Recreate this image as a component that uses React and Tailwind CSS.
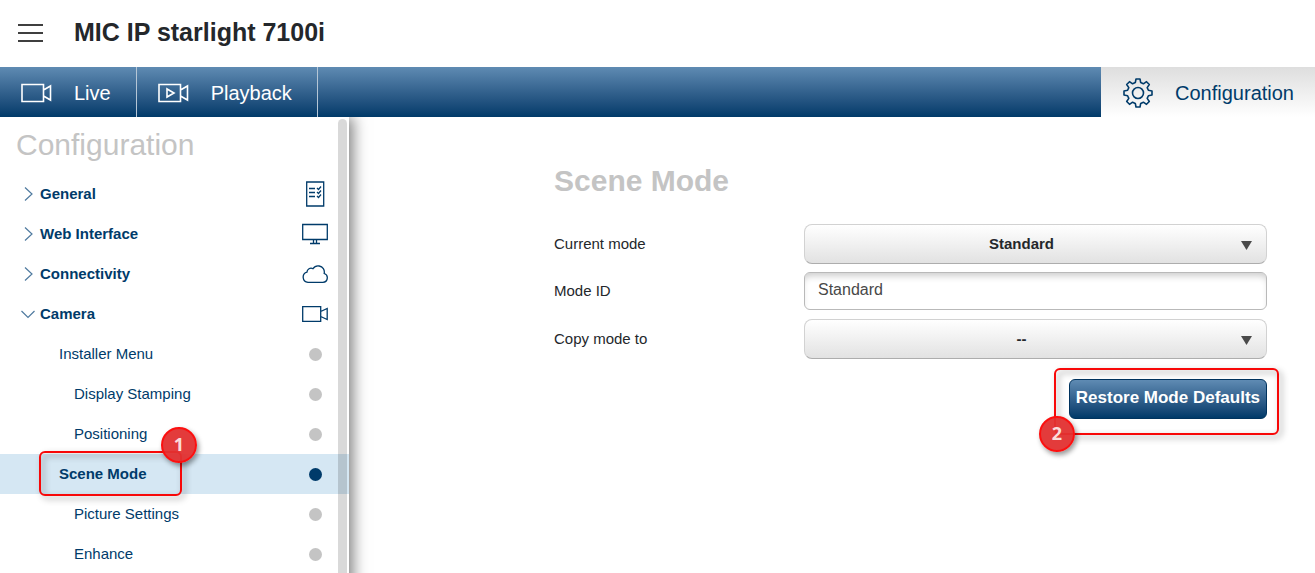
import { useState } from 'react';
import clsx from 'clsx';

const sections = [
    { label: 'General', icon: 'list' },
    { label: 'Web Interface', icon: 'monitor' },
    { label: 'Connectivity', icon: 'cloud' },
    { label: 'Camera', icon: 'camera', open: true },
];

const pages = [
    { label: 'Installer Menu', level: 1 },
    { label: 'Display Stamping', level: 2 },
    { label: 'Positioning', level: 2 },
    { label: 'Scene Mode', level: 1, active: true, step: 1 },
    { label: 'Picture Settings', level: 2 },
    { label: 'Enhance', level: 2 },
];

function CameraIcon({ play, className }) {
    return (
        <svg viewBox="0 0 31 20" fill="none" stroke="currentColor" strokeWidth="1.6" className={className}>
            <path d="M1 1.500h21.500v17H1zM22.500 7l7-4v14l-7-4" />
            {play && <path d="M9 6v8l7-4z" />}
        </svg>
    );
}

function GearIcon() {
    return (
        <svg width="30" height="30" viewBox="0 0 30 30" fill="none" stroke="currentColor" strokeWidth="1.6" strokeLinejoin="round">
            <path d="M12.3 4.600L13 1h4l.7 3.600 2.700 1.200 3.100-2.100 2.800 2.800-2.100 3.100 1.200 2.700L29 13v4l-3.600.7-1.200 2.700 2.100 3.100-2.800 2.800-3.100-2.100-2.700 1.200L17 29h-4l-.7-3.600-2.700-1.200-3.100 2.100-2.800-2.800 2.100-3.100-1.200-2.700L1 17v-4l3.600-.7 1.200-2.700-2.100-3.100 2.800-2.800 3.100 2.100z" />
            <circle cx="15" cy="15" r="5.500" />
        </svg>
    );
}

function SectionIcon({ name }) {
    if (name === 'camera') {
        return (
            <svg width="26" height="16" viewBox="0 0 26 16" fill="none" stroke="currentColor" strokeWidth="1.3">
                <path d="M.7.700h18v14.600h-18zM18.700 5.500l6.500-3v11l-6.500-3" />
            </svg>
        );
    }
    if (name === 'list') {
        return (
            <svg width="26" height="26" viewBox="0 0 26 26" fill="none" stroke="currentColor" strokeWidth="1.3">
                <path d="M4.700 1h17v24h-17z" />
                <path d="M7 7.500h6M7 11.500h6M7 15.500h6M15 7l1.500 1.500L19 5.500M15 11l1.500 1.500L19 9.500M15 15l1.500 1.500 2.500-3" />
            </svg>
        );
    }
    if (name === 'monitor') {
        return (
            <svg width="26" height="26" viewBox="0 0 26 26" fill="none" stroke="currentColor" strokeWidth="1.3">
                <path d="M.7 3.500h24.600v15H.7zM11.500 18.500v3.500M14.500 18.500v3.500M8 22.500h10" />
            </svg>
        );
    }
    return (
        <svg width="26" height="26" viewBox="0 0 26 26" fill="none" stroke="currentColor" strokeWidth="1.3">
            <path d="M6 21.300a5.200 5.200 0 0 1-1-10.200c0-2.900 3.300-5 6-3.400 1.500-2.300 4-3.100 6.200-2.700 3.700.6 5.700 3.800 5 7.500 2 .7 3.200 2.400 3.100 4.400-.1 2.500-2 4.400-4.500 4.400z" />
        </svg>
    );
}

function Chevron({ open }) {
    return (
        <svg width="14" height="14" viewBox="0 0 14 14" fill="none" stroke="#4f7a9f" strokeWidth="1.2">
            <path d={open ? 'M.5 4l6.500 6.500L13.500 4' : 'M4 .5L11 7l-7 6.500'} />
        </svg>
    );
}

// red frame with a numbered badge, laid over the element it points at
function Callout({ step, frame, badge }) {
    return (
        <div className="pointer-events-none">
            <div
                className={clsx(
                    'absolute z-10 rounded-md border-2 border-[#f80808] drop-shadow-[3px_3px_3px_rgba(0,0,0,0.4)]',
                    frame,
                )}
            />
            <div
                className={clsx(
                    "absolute z-10 flex size-9 items-center justify-center rounded-full border-2 border-[#fb1010] bg-[#e23030]/95 pb-[2px] font-['Noto_Sans',sans-serif] text-lg font-bold text-[#fbdcdc] shadow-[2px_3px_5px_rgba(0,0,0,0.4)]",
                    badge,
                )}
            >
                {step}
            </div>
        </div>
    );
}

function NavButton({ label, children }) {
    return (
        <button className="flex items-center gap-[22px] border-r border-[#b5c6d6] pt-[2px] pr-[25px] pl-[21px] text-xl text-white">
            {children}
            {label}
        </button>
    );
}

function Sidebar() {
    return (
        <aside className="relative z-0 -mb-8 w-[349px] shrink-0 bg-white shadow-[4px_0_14px_rgba(0,0,0,0.5)]">
            <h2 className="h-[57px] pl-4 text-[30px] leading-[55px] text-[#c4c4c4]">Configuration</h2>
            <nav className="text-[15px] text-[#003b6a]">
                {sections.map((section) => (
                    <button
                        key={section.label}
                        aria-expanded={!!section.open}
                        className="flex h-10 w-full items-center pr-[21px] pl-[21px] font-bold"
                    >
                        <Chevron open={section.open} />
                        <span className="ml-[5px] flex-1 text-left">{section.label}</span>
                        <SectionIcon name={section.icon} />
                    </button>
                ))}
                {pages.map((page) => (
                    <div key={page.label} className="relative">
                        <a
                            href="#"
                            className={clsx(
                                'flex h-10 items-center justify-between pr-[27px]',
                                page.level === 1 ? 'pl-[59px]' : 'pl-[74px]',
                                page.active && 'bg-[#d5e7f3] font-bold',
                            )}
                        >
                            {page.label}
                            <span className={clsx('size-[13px] rounded-full', page.active ? 'bg-[#003b6a]' : 'bg-[#c4c4c4]')} />
                        </a>
                        {page.step && (
                            <Callout
                                step={page.step}
                                frame="-top-[3px] left-[39px] h-[45px] w-[143px]"
                                badge="-top-[27px] left-[161px]"
                            />
                        )}
                    </div>
                ))}
            </nav>
            <div className="absolute top-[2px] right-[2px] bottom-0 w-[9px] rounded-full bg-black/15" />
        </aside>
    );
}

function SelectField({ id, label, value }) {
    return (
        <div className="flex items-center">
            <label htmlFor={id} className="w-[250px] shrink-0">{label}</label>
            <div className="relative flex-1">
                <select
                    id={id}
                    defaultValue={value}
                    className="block h-10 w-full appearance-none rounded-lg border border-[#d2d2d2] border-b-[#adadad] bg-linear-to-b from-white to-[#e2e2e2] pr-7 text-center font-bold [text-align-last:center]"
                >
                    <option>{value}</option>
                </select>
                <svg width="11" height="9" viewBox="0 0 11 9" fill="#4a4a4a" className="pointer-events-none absolute top-[17px] right-[15px]">
                    <path d="M0 0h11L5.500 9z" />
                </svg>
            </div>
        </div>
    );
}

export default function App() {
    const [modeId, setModeId] = useState('Standard');

    return (
        <div className="flex h-screen flex-col overflow-hidden bg-white font-['Liberation_Sans',Arial,sans-serif] text-[#24272b]">
            <header className="flex h-[67px] shrink-0 items-center gap-[31px] pb-[2px] pl-[18px]">
                <button aria-label="Menu">
                    <svg width="25" height="18" viewBox="0 0 25 18" stroke="#000" strokeWidth="1.6">
                        <path d="M0 1h25M0 9h25M0 17h25" />
                    </svg>
                </button>
                <h1 className="text-[25px] font-bold">MIC IP starlight 7100i</h1>
            </header>

            <div className="relative z-10 flex h-[50px] shrink-0 bg-linear-to-b from-[#5f8bb3] to-[#003a69]">
                <NavButton label="Live">
                    <CameraIcon className="h-5 w-[31px]" />
                </NavButton>
                <NavButton label="Playback">
                    <CameraIcon play className="h-5 w-[31px]" />
                </NavButton>
                <button className="ml-auto flex items-center gap-[22px] bg-linear-to-b from-[#dedede] to-white pt-[2px] pr-[21px] pl-[22px] text-xl text-[#003b6a]">
                    <GearIcon />
                    Configuration
                </button>
            </div>

            <div className="flex min-h-0 flex-1">
                <Sidebar />
                <main className="flex-1 pt-[46px] pr-12 pl-[205px] text-[15px]">
                    <h2 className="text-[30px] leading-9 font-bold text-[#c4c4c4]">Scene Mode</h2>
                    <form className="mt-[25px] flex flex-col gap-2" onSubmit={(e) => e.preventDefault()}>
                        <SelectField id="current-mode" label="Current mode" value="Standard" />
                        <div className="flex h-[39px] items-center">
                            <label htmlFor="mode-id" className="w-[250px] shrink-0">Mode ID</label>
                            <input
                                id="mode-id"
                                value={modeId}
                                onChange={(e) => setModeId(e.target.value)}
                                className="h-[38px] min-w-0 flex-1 self-start rounded-md border border-[#b9b9b9] bg-white px-[13px] pb-[3px] text-base text-[#484848] shadow-[inset_0_6px_7px_-3px_rgba(0,0,0,0.2)]"
                            />
                        </div>
                        <SelectField id="copy-mode" label="Copy mode to" value="--" />
                        <div className="relative mt-3 self-end">
                            <button className="h-10 rounded-md border border-[#00335e] bg-linear-to-b from-[#5f8bb3] to-[#003a69] px-[6px] pb-[2px] text-[17px] font-bold whitespace-nowrap text-white">
                                Restore Mode Defaults
                            </button>
                            <Callout
                                step={2}
                                frame="-top-[11px] -right-[12px] -left-[15px] h-[67px]"
                                badge="top-[37px] -left-[30px]"
                            />
                        </div>
                    </form>
                </main>
            </div>
        </div>
    );
}
